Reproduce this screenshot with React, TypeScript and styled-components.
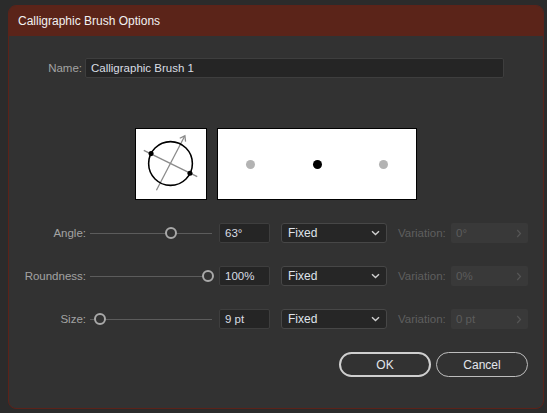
import React from 'react';
import styled, { createGlobalStyle } from 'styled-components';

const Global = createGlobalStyle`
	html, body {
		margin: 0;
		padding: 0;
		background: #2b2b2b;
		width: 547px;
		height: 413px;
		overflow: hidden;
	}
	body {
		font-family: 'Segoe UI', 'Liberation Sans', Arial, sans-serif;
		font-size: 11.5px;
	}
`;

const Page = styled.div`
	padding: 5px 0 0 8px;
`;

const Dialog = styled.div`
	width: 536px;
	height: 404px;
	box-sizing: border-box;
	background: #323232;
	border: 1px solid #5c2219;
	border-radius: 8px;
	overflow: hidden;
	display: flex;
	flex-direction: column;
`;

const TitleBar = styled.div`
	height: 30px;
	background: #5b2419;
	color: #f2f2f2;
	font-size: 12px;
	display: flex;
	align-items: center;
	padding-left: 9px;
	flex-shrink: 0;
`;

const Body = styled.div`
	padding: 22px 0 0 0;
	display: flex;
	flex-direction: column;
`;

const Row = styled.div<{ mt?: number }>`
	display: flex;
	align-items: center;
	height: 20px;
	margin-top: ${(p) => p.mt || 0}px;
`;

const Label = styled.div<{ w: number; gap: number }>`
	width: ${(p) => p.w}px;
	margin-right: ${(p) => p.gap}px;
	text-align: right;
	color: #a3a3a3;
	flex-shrink: 0;
`;

const TextBox = styled.div<{ w: number }>`
	width: ${(p) => p.w}px;
	height: 20px;
	box-sizing: border-box;
	background: #252525;
	border: 1px solid #3e3e3e;
	border-radius: 2px;
	color: #d9dde3;
	display: flex;
	align-items: center;
	padding-left: 5px;
	flex-shrink: 0;
`;

const Preview = styled.div`
	display: flex;
	gap: 10px;
	margin: 50px 0 0 126px;
`;

const WhiteBox = styled.div<{ w: number }>`
	width: ${(p) => p.w}px;
	height: 72px;
	box-sizing: border-box;
	background: #ffffff;
	border: 1px solid #000000;
	display: flex;
	align-items: center;
	justify-content: space-between;
	padding: 0 28px 0 28px;
`;

const Dot = styled.div<{ dark?: boolean }>`
	width: 9px;
	height: 9px;
	border-radius: 50%;
	background: ${(p) => (p.dark ? '#000' : '#b3b3b3')};
`;

const Slider = styled.div`
	position: relative;
	width: 122px;
	height: 20px;
	margin-right: 7px;
	flex-shrink: 0;
	&::before {
		content: '';
		position: absolute;
		left: 0;
		right: 0;
		top: 10px;
		height: 1px;
		background: #5c5c5c;
	}
`;

const Thumb = styled.div`
	position: absolute;
	top: 4px;
	width: 12px;
	height: 12px;
	box-sizing: border-box;
	margin-left: -6px;
	border-radius: 50%;
	border: 2px solid #a9a9a9;
	background: #323232;
`;

const Select = styled.div`
	width: 106px;
	height: 20px;
	box-sizing: border-box;
	margin-left: 11px;
	background: #262626;
	border: 1px solid #474747;
	border-radius: 3px;
	color: #dfe3ea;
	display: flex;
	align-items: center;
	justify-content: space-between;
	padding: 0 6px 0 6px;
	font-size: 12px;
`;

const VarLabel = styled.div`
	margin-left: 11px;
	width: 49px;
	color: #5f5f5f;
	font-size: 11.5px;
`;

const Disabled = styled.div`
	width: 77px;
	height: 20px;
	margin-left: 4px;
	box-sizing: border-box;
	background: #393939;
	border-radius: 2px;
	color: #5c5c5c;
	display: flex;
	align-items: center;
	justify-content: space-between;
	padding: 0 6px 0 5px;
`;

const Buttons = styled.div`
	display: flex;
	justify-content: flex-end;
	gap: 5px;
	margin: 23px 15px 0 0;
`;

const Button = styled.div<{ primary?: boolean }>`
	width: 92px;
	height: 25px;
	box-sizing: border-box;
	border-radius: 13px;
	border: ${(p) => (p.primary ? '2px solid #cfcfcf' : '1px solid #bdbdbd')};
	color: #e2e6ec;
	font-size: 12px;
	display: flex;
	align-items: center;
	justify-content: center;
`;

const Chevron = ({ color = '#d0d0d0', dir = 'down' }: { color?: string; dir?: string }) =>
	dir === 'down' ? (
		<svg width="9" height="6" viewBox="0 0 9 6">
			<path d="M1 1.2 L4.5 4.5 L8 1.2" fill="none" stroke={color} strokeWidth="1.4" />
		</svg>
	) : (
		<svg width="6" height="9" viewBox="0 0 6 9">
			<path d="M1.2 1 L4.5 4.5 L1.2 8" fill="none" stroke={color} strokeWidth="1.2" />
		</svg>
	);

const AngleIcon = () => (
	<svg width="72" height="72" viewBox="0 0 72 72" style={{ background: '#fff', border: '1px solid #000', boxSizing: 'border-box', display: 'block' }}>
		<line x1="21" y1="63" x2="50" y2="7.5" stroke="#8a8a8a" strokeWidth="1.3" />
		<path d="M45 9.5 L50.3 7 L51 13" fill="none" stroke="#8a8a8a" strokeWidth="1.3" />
		<line x1="8" y1="22" x2="63" y2="49" stroke="#8a8a8a" strokeWidth="1.3" />
		<circle cx="35.5" cy="35.5" r="22.5" fill="none" stroke="#000" strokeWidth="1.6" />
		<circle cx="15.5" cy="25.3" r="2.6" fill="#000" />
		<circle cx="55.5" cy="45.5" r="2.6" fill="#000" />
	</svg>
);

const rows = [
	{ label: 'Angle:', pos: 81, value: '63°', variation: '0°' },
	{ label: 'Roundness:', pos: 118, value: '100%', variation: '0%' },
	{ label: 'Size:', pos: 10, value: '9 pt', variation: '0 pt' },
];

export default function App() {
	return (
		<Page>
			<Global />
			<Dialog>
				<TitleBar>Calligraphic Brush Options</TitleBar>
				<Body>
					<Row>
						<Label w={73} gap={3}>Name:</Label>
						<TextBox w={419}>Calligraphic Brush 1</TextBox>
					</Row>
					<Preview>
						<AngleIcon />
						<WhiteBox w={200}>
							<Dot />
							<Dot dark />
							<Dot />
						</WhiteBox>
					</Preview>
					{rows.map((r) => (
						<Row key={r.label} mt={23}>
							<Label w={77} gap={4}>{r.label}</Label>
							<Slider>
								<Thumb style={{ left: r.pos }} />
							</Slider>
							<TextBox w={51}>{r.value}</TextBox>
							<Select>
								Fixed
								<Chevron />
							</Select>
							<VarLabel>Variation:</VarLabel>
							<Disabled>
								{r.variation}
								<Chevron dir="right" color="#555" />
							</Disabled>
						</Row>
					))}
					<Buttons>
						<Button primary>OK</Button>
						<Button>Cancel</Button>
					</Buttons>
				</Body>
			</Dialog>
		</Page>
	);
}
